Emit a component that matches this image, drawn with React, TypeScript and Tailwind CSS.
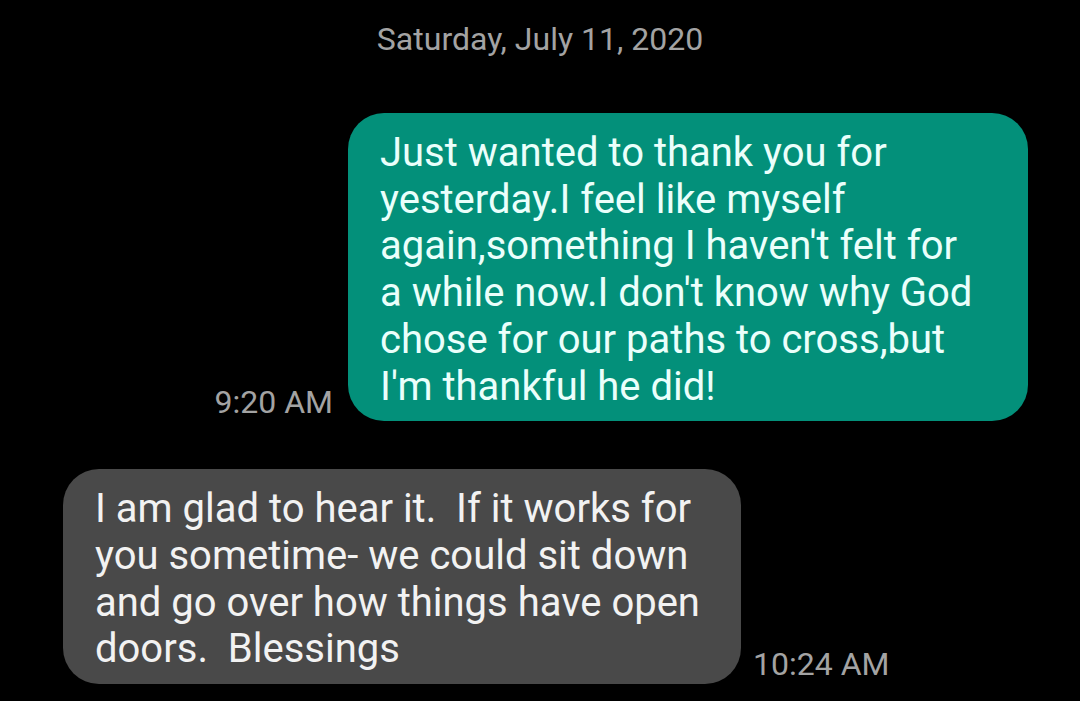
import * as React from "react";

const sent = [
    "Just wanted to thank you for",
    "yesterday.I feel like myself",
    "again,something I haven't felt for",
    "a while now.I don't know why God",
    "chose for our paths to cross,but",
    "I'm thankful he did!",
];

const received = [
    "I am glad to hear it.  If it works for",
    "you sometime- we could sit down",
    "and go over how things have open",
    "doors.  Blessings",
];

const Lines = ({ lines }: { lines: string[] }) => (
    <>
        {lines.map((l, i) => (
            <div key={i} className="whitespace-pre">
                {l}
            </div>
        ))}
    </>
);

export default function App() {
    return (
        <div className="w-[1080px] h-[701px] bg-black overflow-hidden font-['Roboto','Liberation_Sans',sans-serif]">
            {/* date header */}
            <div className="pt-[20px] text-center text-[32px] leading-[38px] text-[#a3a3a3]">
                Saturday, July 11, 2020
            </div>

            {/* outgoing */}
            <div className="flex justify-end items-end gap-[15px] pr-[52px] mt-[55px]">
                <div className="text-[32px] leading-[38px] text-[#a3a3a3]">9:20 AM</div>
                <div className="w-[680px] rounded-[36px] bg-[#03907a] pl-[32px] pr-[32px] pt-[17px] pb-[11px] text-[40px] leading-[46.7px] text-[#eafffb]">
                    <Lines lines={sent} />
                </div>
            </div>

            {/* incoming */}
            <div className="flex items-end gap-[12px] pl-[63px] mt-[48px]">
                <div className="w-[678px] rounded-[36px] bg-[#494949] pl-[32px] pr-[32px] pt-[17px] pb-[11px] text-[40px] leading-[46.7px] text-[#f2f2f2]">
                    <Lines lines={received} />
                </div>
                <div className="text-[32px] leading-[38px] text-[#a3a3a3] mb-[1px]">10:24 AM</div>
            </div>
        </div>
    );
}
